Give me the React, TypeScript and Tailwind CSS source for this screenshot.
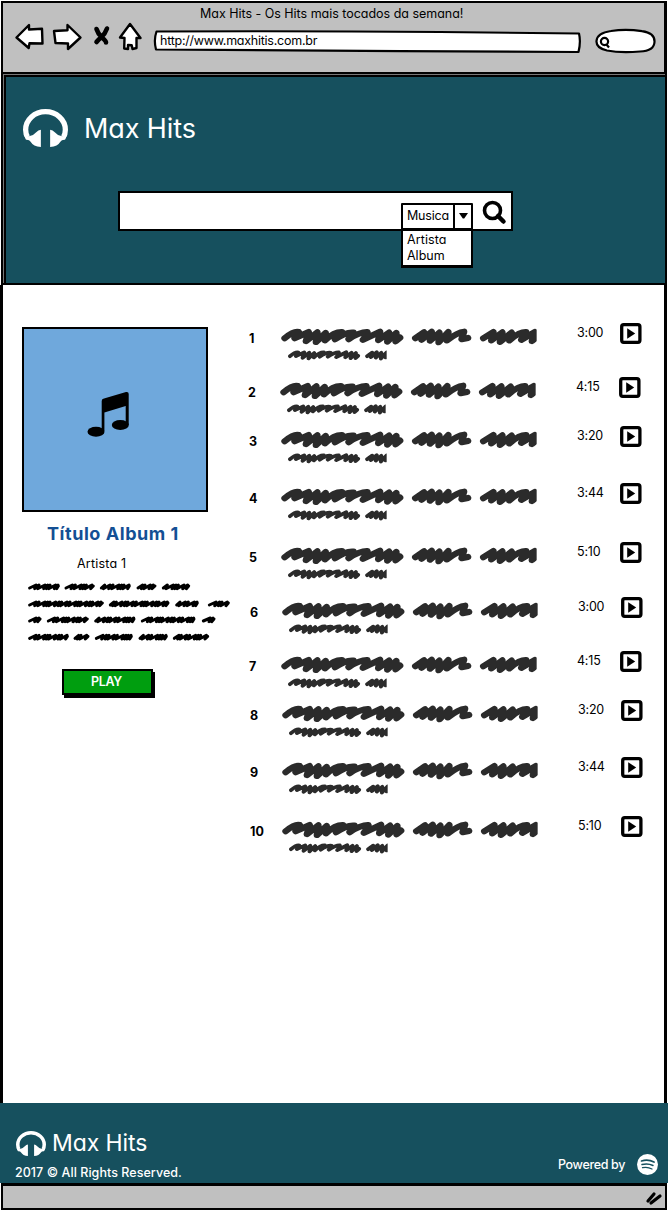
import React from "react";

type Track = { n: number; time: string; row: string; shift: string };

const tracks: Track[] = [
  { n: 1, time: "3:00", row: "h-[54px]", shift: "pl-[1px]" },
  { n: 2, time: "4:15", row: "h-[49px]", shift: "pl-0" },
  { n: 3, time: "3:20", row: "h-[57px]", shift: "pl-[1px]" },
  { n: 4, time: "3:44", row: "h-[59px]", shift: "pl-[1px]" },
  { n: 5, time: "5:10", row: "h-[55px]", shift: "pl-[1px]" },
  { n: 6, time: "3:00", row: "h-[54px]", shift: "pl-[2px]" },
  { n: 7, time: "4:15", row: "h-[49px]", shift: "pl-[1px]" },
  { n: 8, time: "3:20", row: "h-[57px]", shift: "pl-[2px]" },
  { n: 9, time: "3:44", row: "h-[59px]", shift: "pl-[2px]" },
  { n: 10, time: "5:10", row: "h-[40px]", shift: "pl-[2px]" },
];

// Word extents for each line of the description, in thirds of a pixel.
const notes: { y: number; words: [number, number][] }[] = [
  { y: 14, words: [[0, 95], [109, 200], [215, 308], [325, 385], [401, 486]] },
  { y: 65, words: [[0, 227], [242, 424], [441, 512], [539, 605]] },
  { y: 113, words: [[0, 40], [56, 182], [198, 322], [338, 502], [521, 562]] },
  { y: 165, words: [[0, 122], [136, 184], [200, 314], [331, 419], [434, 543]] },
];

function zigzag(from: number, to: number, y: number) {
  const steps = [19, 12, 21, 11, 10, 20, 14, 10];
  let x = from + 5;
  let d = `M${x} ${y + 4}`;
  let i = Math.round(from / 7) % steps.length;
  while (x < to - 14) {
    const s = steps[i % steps.length];
    const top = Math.min(x + s, to - 5);
    d += ` L${top} ${y - 5} L${top - 4} ${y + 6}`;
    x = top - 3;
    i += 1;
  }
  return d + ` L${to - 4} ${y - 2}`;
}

const SCRAWL =
  "M12 33Q40 8 54 13Q60 20 42 33Q66 22 84 13L76 42L110 14L106 45L135 16L133 40Q160 12 184 13Q186 20 163 36Q196 12 219 15Q222 22 204 36Q238 12 260 13Q262 20 247 38L298 12L293 39L325 15L320 44L347 16L345 43L358 31M404 33L430 14L423 38L453 12L448 41L476 15L474 46L503 13L499 40Q530 14 550 12L543 36L562 32M608 33L638 13L632 40L665 14L658 45L693 15L686 40Q716 12 736 13L722 38L762 13L754 42L786 14";

function Scrawl() {
  return (
    <svg width="258" height="35" viewBox="0 0 774 105" fill="none" stroke="#2b2b2b" strokeWidth="20" strokeLinecap="round" strokeLinejoin="round">
      <svg width="770" height="60">
        <path d={SCRAWL} transform="translate(2 3) scale(1 .93)" />
      </svg>
      <svg width="320" height="105">
        <path d={SCRAWL} transform="translate(23 69) scale(.59 .56)" />
      </svg>
    </svg>
  );
}

function Headphones({ className }: { className: string }) {
  return (
    <svg className={className} viewBox="0 0 136 114" preserveAspectRatio="none" fill="#fff">
      <path d="M14 84Q8 76 8 62A60 54 0 0 1 128 62Q128 76 122 84" fill="none" stroke="#fff" strokeWidth="16" />
      <path d="M3 78L9 92Q19 91 23 98Q31 112 54 114V62Q46 62 40 70Q32 80 18 82Z" />
      <path d="M133 78L127 92Q117 91 113 98Q105 112 82 114V62Q90 62 96 70Q104 80 118 82Z" />
    </svg>
  );
}

function PlayBox() {
  return (
    <svg className="mt-px ml-px" width="22" height="22" viewBox="0 0 22 22">
      <rect x="1.7" y="1.7" width="18.2" height="17.6" rx="2" fill="#fff" stroke="#000" strokeWidth="3.3" />
      <path d="M7.2 5.2L15.2 10.5L7.2 15.8Z" />
    </svg>
  );
}

function BrowserBar() {
  return (
    <header className="flex h-[71px] flex-col border-r-[3px] border-l-2 border-t-2 border-black bg-[#c0c0c0]">
      <div className="h-[19px] pl-[197px] text-[12.500px] leading-[21px] tracking-[-0.02px] whitespace-nowrap">
        Max Hits - Os Hits mais tocados da semana!
      </div>
      <div className="flex h-[34px] pl-[11px]">
        <svg width="132" height="34" viewBox="14 22 132 34" fill="#fff" stroke="#000" strokeWidth="2.4" strokeLinejoin="round" strokeLinecap="round">
          <path d="M16.5 37.5L29 25V29.5L42 28.7L42.5 43.5L29.5 43.3L28.7 48Z" />
          <path d="M54 31L67.5 30.2V25L80.5 37.5L68 49V43.5L55.5 43Z" />
          <path d="M96.500 29Q98 34 102 37.500T106 42.500M107 28.500Q105 34 101.500 37T96.500 42" strokeWidth="4.600" fill="none" />
          <path d="M130 24L120 37.5L124.5 38L124.2 48.5L128 49V45L131.7 45.2L132.5 49L136.5 48V38L140.5 38Z" />
        </svg>
        <div className="relative ml-[7px] w-[428px]">
          <svg className="absolute inset-0" width="428" height="34" viewBox="153 22 428 34" fill="#fff" stroke="#000" strokeWidth="2.2" strokeLinejoin="round">
            <path d="M156.5 31.5Q300 30.8 440 32L579 33.5Q581 42 578.5 52L400 51.2L156 49.5Q153.500 40 156.500 31.500Z" />
          </svg>
          <span className="relative block pl-[7px] pt-[9px] text-[12.5px] leading-[19px] tracking-[-0.25px] text-black">http://www.maxhitis.com.br</span>
        </div>
        <svg className="ml-[14px]" width="62" height="34" viewBox="595 22 62 34" fill="#fff" stroke="#000" strokeWidth="2.2">
          <path d="M611 31Q626 28.500 642 31.200Q655 33 654.500 42Q654 51 640 51.500Q620 53 607 50.500Q596 48 596.500 41Q597 33 611 31Z" />
          <circle cx="604.500" cy="41.500" r="3.600" />
          <path d="M606.500 44.500L609 47.500" />
        </svg>
      </div>
    </header>
  );
}

export default function App() {
  return (
    <div className="flex h-[1212px] w-[668px] flex-col bg-white pt-px text-black font-[Inter,sans-serif] [font-feature-settings:'cv11']">
      <div className="ml-[1px] w-[666px]">
        <BrowserBar />
      </div>

      <section className="ml-[1px] h-[213px] w-[666px] border-2 border-black bg-[#777777] pl-px pt-px">
        <div className="h-[208px] w-[661px] border-l-2 border-t-2 border-black bg-[#16505e]">
          <div className="flex h-[114px] pl-[17px] pt-[32px]">
            <Headphones className="h-[38px] w-[45px]" />
            <span className="ml-[16px] pt-px text-[27px] leading-[38px] tracking-[-0.100px] text-white">Max Hits</span>
          </div>
          <div className="ml-[112px] flex h-[40px] w-[395px] items-start justify-end border-2 border-black bg-white">
            <div className="relative mt-[10px] flex h-[27px] w-[72px] rounded-[1px] border-2 border-black text-[12.500px] leading-[21px]">
              <span className="w-[50px] pl-[4px] tracking-[-0.2px]">Musica</span>
              <span className="flex flex-1 justify-center border-l-2 border-black pt-[8px]">
                <svg width="9" height="6" viewBox="0 0 9 6"><path d="M0 0H9L5.200 5.500H3.800Z" /></svg>
              </span>
              <div className="absolute -left-[2px] top-[23px] h-[40px] w-[72px] border-2 border-t-[3px] border-b-[3px] border-black bg-white pl-[4px] pt-px leading-[16px]">
                <div className="tracking-[0.1px]">Artista</div>
                <div>Album</div>
              </div>
            </div>
            <svg className="mr-[4px] ml-[8px] mt-[6px]" width="26" height="26" viewBox="481 199 26 26" fill="none" stroke="#000">
              <circle cx="492.500" cy="210.500" r="8" strokeWidth="3.600" />
              <path d="M498 216L503.500 221.500" strokeWidth="4.500" strokeLinecap="round" />
            </svg>
          </div>
        </div>
      </section>

      <main className="flex h-[818px] w-[667px] border-x-[3px] border-black bg-white">
        <aside className="flex w-[235px] flex-col pl-[19px] pt-[42px]">
          <div className="flex h-[185px] w-[186px] border-[2.500px] border-black bg-[#6fa8dc] pl-[61px] pt-[61px]">
            <svg width="46" height="48" viewBox="85 390 46 48">
              <path d="M101.700 401Q101.700 399 104 398.600L126 392Q128.700 391.500 128.700 394V425H125.700V406L104.400 412.500V431H101.700Z" />
              <ellipse cx="96" cy="431.700" rx="8.500" ry="5" />
              <ellipse cx="120.300" cy="425" rx="8.500" ry="5" />
            </svg>
          </div>
          <h2 className="mt-[9px] pl-[25px] text-[18px] font-bold leading-[25px] tracking-[0.55px] whitespace-nowrap text-[#134f94]">Título Album 1</h2>
          <p className="mt-[9px] pl-[55px] text-[12.500px] leading-[18px] tracking-[0.2px]">Artista 1</p>
          <svg className="mt-[9px] ml-[6px]" width="204" height="62" viewBox="0 0 612 186" fill="none" stroke="#000" strokeWidth="9" strokeLinecap="round" strokeLinejoin="round">
            {notes.map((line) =>
              line.words.map(([a, b]) => <path key={`${line.y}-${a}`} d={zigzag(a, b, line.y)} />)
            )}
          </svg>
          <button className="mt-[25px] ml-[40px] h-[26px] w-[91px] border-2 border-black bg-[#009e0f] pr-[2px] text-[12.500px] font-semibold leading-[22px] tracking-[-0.300px] text-white shadow-[2px_3px_0_#000]">PLAY</button>
        </aside>
        <ol className="flex flex-col pt-[37px]">
          {tracks.map((t) => (
            <li key={t.n} className={`flex ${t.row} ${t.shift}`}>
              <span className="w-[41px] pl-[10px] pt-[8px] text-[12.500px] font-bold leading-[18px]">{t.n}</span>
              <span className="mt-[5px] w-[258px]"><Scrawl /></span>
              <span className="w-[81px] pl-[39px] pt-[2px] text-[12.500px] leading-[18px] tracking-[-0.200px]">{t.time}</span>
              <PlayBox />
            </li>
          ))}
        </ol>
      </main>

      <footer className="flex h-[80px] w-[668px] justify-between bg-[#16505e] text-white">
        <div className="pl-[16px] pt-[25px]">
          <div className="flex h-[30px] items-center">
            <Headphones className="h-[25px] w-[30px]" />
            <span className="ml-[6px] text-[23px] leading-[28px] tracking-[-0.100px]">Max Hits</span>
          </div>
          <p className="mt-[4px] -ml-px text-[12.500px] font-medium leading-[21px] tracking-[0.050px]">2017 © All Rights Reserved.</p>
        </div>
        <div className="flex h-[22px] items-center pr-[10px] mt-[50px]">
          <span className="mr-[12px] text-[12.500px] font-medium leading-[18px] pt-px tracking-[-0.350px]">Powered by</span>
          <svg width="21" height="21" viewBox="0 0 21 21" fill="none" stroke="#16505e" strokeLinecap="round">
            <circle cx="10.500" cy="10.500" r="10.500" fill="#fff" stroke="none" />
            <path d="M4.500 7Q11 5 17 8" strokeWidth="1.700" />
            <path d="M5 10.500Q11 9 16 11.500" strokeWidth="1.500" />
            <path d="M5.500 13.700Q10.500 12.500 15 15" strokeWidth="1.300" />
          </svg>
        </div>
      </footer>
      <div className="ml-[1px] flex h-[27px] w-[666px] justify-end border-2 border-t-[3px] border-black bg-[#c0c0c0] pr-[2px] pt-[5px]">
        <svg width="18" height="16" viewBox="0 0 18 16" fill="none" stroke="#000" strokeWidth="3.200" strokeLinecap="round">
          <path d="M3 10L9 3M6 12L15 5" />
        </svg>
      </div>
    </div>
  );
}
